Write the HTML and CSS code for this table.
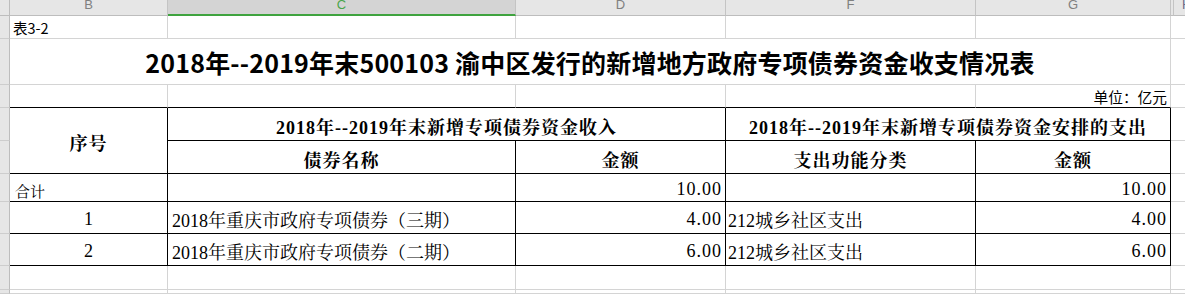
FILE: index.html
```html
<!DOCTYPE html>
<html lang="zh-CN">
<head>
<meta charset="utf-8">
<title>表3-2</title>
<link rel="stylesheet" href="styles.css">
</head>
<body>
<div class="sheet">
  <div class="colhead">
    <div class="ch corner"></div>
    <div class="ch cb">B</div>
    <div class="ch cc sel">C</div>
    <div class="ch cd">D</div>
    <div class="ch cf">F</div>
    <div class="ch cg">G</div>
    <div class="ch chid"></div>
    <div class="ch chh">H</div>
  </div>
  <div class="grid">
    <!-- row 1 -->
    <div class="rh"></div>
    <div class="c sans note">表3-2</div>
    <div class="c"></div><div class="c"></div><div class="c"></div><div class="c"></div>
    <div class="c last"></div>
    <!-- row 2 -->
    <div class="rh"></div>
    <div class="c title">2018年--2019年末500103 渝中区发行的新增地方政府专项债券资金收支情况表</div>
    <div class="c last"></div>
    <!-- row 3 -->
    <div class="rh"></div>
    <div class="c tb"></div><div class="c tb"></div><div class="c tb"></div><div class="c tb"></div>
    <div class="c tb sans unit">单位：亿元</div>
    <div class="c last"></div>
    <!-- row 4 -->
    <div class="rh"></div>
    <div class="c t th seq">序号</div>
    <div class="c t th span2">2018年--2019年末新增专项债券资金收入</div>
    <div class="c t th span2">2018年--2019年末新增专项债券资金安排的支出</div>
    <div class="c last"></div>
    <!-- row 5 -->
    <div class="rh"></div>
    <div class="c t th">债券名称</div>
    <div class="c t th">金额</div>
    <div class="c t th">支出功能分类</div>
    <div class="c t th">金额</div>
    <div class="c last"></div>
    <!-- row 6 -->
    <div class="rh"></div>
    <div class="c t td left small">合计</div>
    <div class="c t td"></div>
    <div class="c t td num">10.00</div>
    <div class="c t td"></div>
    <div class="c t td num">10.00</div>
    <div class="c last"></div>
    <!-- row 7 -->
    <div class="rh"></div>
    <div class="c t td center">1</div>
    <div class="c t td left">2018年重庆市政府专项债券（三期）</div>
    <div class="c t td num">4.00</div>
    <div class="c t td left tight">212城乡社区支出</div>
    <div class="c t td num">4.00</div>
    <div class="c last"></div>
    <!-- row 8 -->
    <div class="rh"></div>
    <div class="c t td center">2</div>
    <div class="c t td left">2018年重庆市政府专项债券（二期）</div>
    <div class="c t td num">6.00</div>
    <div class="c t td left tight">212城乡社区支出</div>
    <div class="c t td num">6.00</div>
    <div class="c last"></div>
    <!-- row 9 -->
    <div class="rh"></div>
    <div class="c"></div><div class="c"></div><div class="c"></div><div class="c"></div><div class="c"></div>
    <div class="c last"></div>
    <!-- row 10 -->
    <div class="rh"></div>
    <div class="c"></div><div class="c"></div><div class="c"></div><div class="c"></div><div class="c"></div>
    <div class="c last"></div>
  </div>
</div>
</body>
</html>
```
FILE: styles.css
```css
* { box-sizing: border-box; margin: 0; padding: 0; }
html, body { width: 1185px; height: 294px; overflow: hidden; background: #fff; }
body { font-family: "Noto Sans CJK SC", sans-serif; color: #000; }

.sheet { width: 1185px; height: 294px; overflow: hidden; display: flex; flex-direction: column; }

/* column header */
.colhead { display: flex; height: 16px; flex: none; }
.ch {
  height: 16px;
  background: #e6e6e6;
  border-right: 1px solid #c4c4c4;
  border-bottom: 1px solid #bdbdbd;
  font-family: "Liberation Sans", sans-serif;
  font-size: 13px;
  line-height: 10px;
  color: #808080;
  text-align: center;
  overflow: hidden;
  flex: none;
}
.corner { width: 10px; border-right-color: #bdbdbd; }
.cb { width: 158px; }
.cc { width: 348px; }
.cd { width: 210px; }
.cf { width: 250px; }
.cg { width: 195px; }
.chid { width: 3px; }
.chh { flex: 1; text-align: left; padding-left: 8px; border-right: none; color: #6a6a8a; }
.sel { background: #d4d4d4; border-bottom: 2px solid #3fa33f; color: #4aa44a; }

/* body grid */
.grid {
  flex: 1;
  display: grid;
  grid-template-columns: 10px 158px 348px 210px 250px 195px 1fr;
  grid-template-rows: 23px 46px 23px 33px 33px 28px 32px 32px 24px 1fr;
}
.rh { background: #e6e6e6; border-right: 1px solid #bdbdbd; border-bottom: 1px solid #cdcdcd; }
.c {
  border-right: 1px solid #d4d4d4;
  border-bottom: 1px solid #d4d4d4;
  display: flex;
  align-items: center;
  white-space: nowrap;
  min-width: 0;
}
.c.last { border-right: none; }

.sans { font-family: "Noto Sans CJK SC", sans-serif; }
.note { font-size: 14.5px; padding-left: 3px; padding-top: 1px; }
.title {
  grid-column: span 5;
  justify-content: center;
  font-size: 25px;
  font-weight: 700;
  letter-spacing: 0.2px;
  border-right-color: #d4d4d4;
}
.unit { justify-content: flex-end; font-size: 14.7px; padding-right: 3px; }
.tb { border-bottom-color: #000; }

/* table */
.t {
  border-right-color: #000;
  border-bottom-color: #000;
  font-family: "Liberation Serif", "Noto Serif CJK SC", "Noto Sans CJK SC", serif;
  font-size: 18px;
  padding: 3px 4px 0;
}
.th { justify-content: center; font-weight: 700; letter-spacing: 1px; }
.seq { grid-row: span 2; }
.span2 { grid-column: span 2; }
.left { justify-content: flex-start; }
.center { justify-content: center; }
.num { justify-content: flex-end; letter-spacing: 1px; padding-right: 3px; }
.tight { padding-left: 2px; }
.small { font-size: 15px; padding-left: 5px; padding-top: 5px; }
```
